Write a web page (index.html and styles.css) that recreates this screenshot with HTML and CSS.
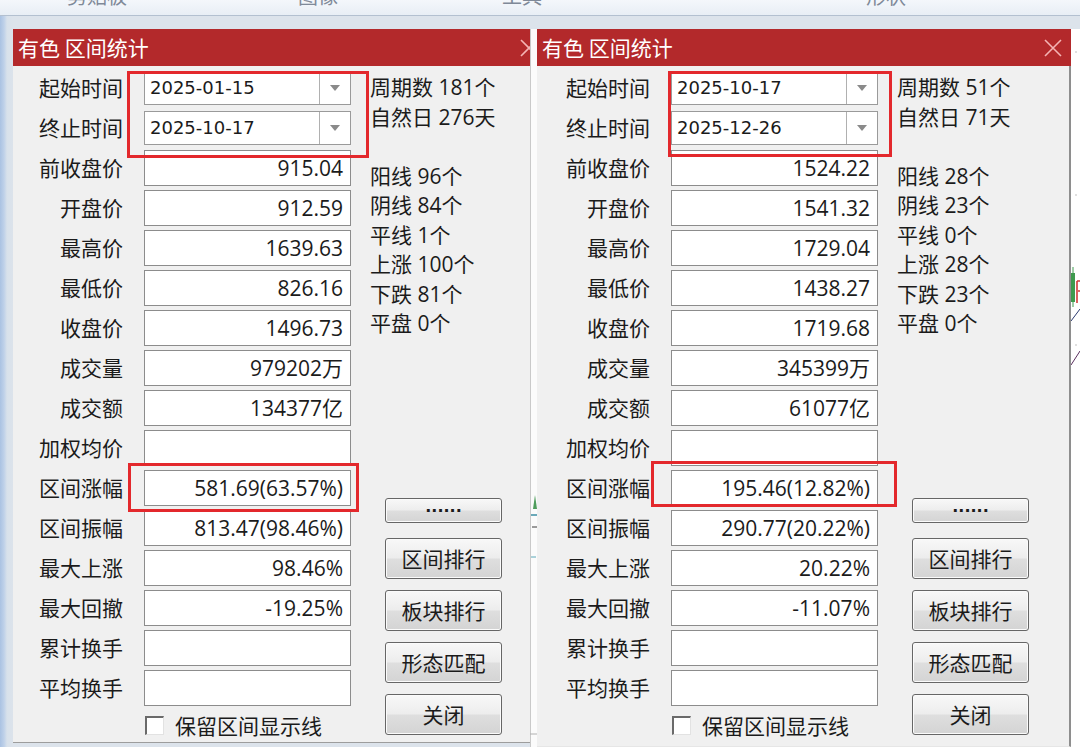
FILE: index.html
```html
<!DOCTYPE html>
<html lang="zh-CN">
<head>
<meta charset="utf-8">
<title>有色 区间统计</title>
<link rel="stylesheet" href="styles.css">
</head>
<body>
<div class="topbar">
  <span class="rib rib-1">剪贴板</span>
  <span class="rib rib-2">图像</span>
  <span class="rib rib-3">工具</span>
  <span class="rib rib-4">形状</span>
</div>
<div class="stage">
  <div class="edge"></div>

  <div class="clip clip-left">
    <section class="dialog">
      <header class="titlebar">
        <span class="title">有色 区间统计</span>
        <svg class="close" width="18" height="18" viewBox="0 0 18 18"><path d="M1 1 L17 17 M17 1 L1 17" stroke="#f4b4b4" stroke-width="1.6" fill="none"/></svg>
      </header>
      <div class="body">
        <div class="fields">
          <div class="row"><span class="lbl">起始时间</span><div class="box combo"><span class="date">2025-01-15</span><span class="drop"><svg width="10" height="6" viewBox="0 0 10 6"><path d="M0 0 H10 L5 6 Z" fill="#8a8a8a"/></svg></span></div></div>
          <div class="row"><span class="lbl">终止时间</span><div class="box combo"><span class="date">2025-10-17</span><span class="drop"><svg width="10" height="6" viewBox="0 0 10 6"><path d="M0 0 H10 L5 6 Z" fill="#8a8a8a"/></svg></span></div></div>
          <div class="row"><span class="lbl">前收盘价</span><div class="box">915.04</div></div>
          <div class="row"><span class="lbl">开盘价</span><div class="box">912.59</div></div>
          <div class="row"><span class="lbl">最高价</span><div class="box">1639.63</div></div>
          <div class="row"><span class="lbl">最低价</span><div class="box">826.16</div></div>
          <div class="row"><span class="lbl">收盘价</span><div class="box">1496.73</div></div>
          <div class="row"><span class="lbl">成交量</span><div class="box">979202万</div></div>
          <div class="row"><span class="lbl">成交额</span><div class="box">134377亿</div></div>
          <div class="row"><span class="lbl">加权均价</span><div class="box"></div></div>
          <div class="row"><span class="lbl">区间涨幅</span><div class="box">581.69(63.57%)</div></div>
          <div class="row"><span class="lbl">区间振幅</span><div class="box">813.47(98.46%)</div></div>
          <div class="row"><span class="lbl">最大上涨</span><div class="box">98.46%</div></div>
          <div class="row"><span class="lbl">最大回撤</span><div class="box">-19.25%</div></div>
          <div class="row"><span class="lbl">累计换手</span><div class="box"></div></div>
          <div class="row"><span class="lbl">平均换手</span><div class="box"></div></div>
          <div class="check-row"><span class="checkbox"></span><span class="check-label">保留区间显示线</span></div>
        </div>
        <div class="side">
          <div class="info">
            <div>周期数 181个</div>
            <div>自然日 276天</div>
            <div class="blank"></div>
            <div>阳线 96个</div>
            <div>阴线 84个</div>
            <div>平线 1个</div>
            <div>上涨 100个</div>
            <div>下跌 81个</div>
            <div>平盘 0个</div>
          </div>
          <div class="buttons">
            <button class="btn btn-more">......</button>
            <button class="btn">区间排行</button>
            <button class="btn">板块排行</button>
            <button class="btn">形态匹配</button>
            <button class="btn">关闭</button>
          </div>
        </div>
      </div>
      <div class="hl hl-dates-l"></div>
      <div class="hl hl-range-l"></div>
    </section>
  </div>

  <div class="gap">
    <svg width="7" height="718" viewBox="0 0 7 718">
      <line x1="0.5" y1="0" x2="0.5" y2="718" stroke="#c9c9c9" stroke-width="1"/>
      <path d="M5 466 L3 480 L7 480 Z" fill="#4f9d5c"/>
      <line x1="1" y1="486" x2="7" y2="486" stroke="#3b8ea3" stroke-width="1.5"/>
      <line x1="2" y1="498" x2="7" y2="498" stroke="#3a3a3a" stroke-width="1"/>
      <line x1="1" y1="528" x2="6" y2="528" stroke="#5aa8b8" stroke-width="1"/>
      <line x1="0" y1="705" x2="7" y2="705" stroke="#b0b0b0" stroke-width="1"/>
    </svg>
  </div>

  <div class="clip clip-right">
    <section class="dialog dialog-right">
      <header class="titlebar">
        <span class="title">有色 区间统计</span>
        <svg class="close" width="18" height="18" viewBox="0 0 18 18"><path d="M1 1 L17 17 M17 1 L1 17" stroke="#f4b4b4" stroke-width="1.6" fill="none"/></svg>
      </header>
      <div class="body">
        <div class="fields">
          <div class="row"><span class="lbl">起始时间</span><div class="box combo"><span class="date">2025-10-17</span><span class="drop"><svg width="10" height="6" viewBox="0 0 10 6"><path d="M0 0 H10 L5 6 Z" fill="#8a8a8a"/></svg></span></div></div>
          <div class="row"><span class="lbl">终止时间</span><div class="box combo"><span class="date">2025-12-26</span><span class="drop"><svg width="10" height="6" viewBox="0 0 10 6"><path d="M0 0 H10 L5 6 Z" fill="#8a8a8a"/></svg></span></div></div>
          <div class="row"><span class="lbl">前收盘价</span><div class="box">1524.22</div></div>
          <div class="row"><span class="lbl">开盘价</span><div class="box">1541.32</div></div>
          <div class="row"><span class="lbl">最高价</span><div class="box">1729.04</div></div>
          <div class="row"><span class="lbl">最低价</span><div class="box">1438.27</div></div>
          <div class="row"><span class="lbl">收盘价</span><div class="box">1719.68</div></div>
          <div class="row"><span class="lbl">成交量</span><div class="box">345399万</div></div>
          <div class="row"><span class="lbl">成交额</span><div class="box">61077亿</div></div>
          <div class="row"><span class="lbl">加权均价</span><div class="box"></div></div>
          <div class="row"><span class="lbl">区间涨幅</span><div class="box">195.46(12.82%)</div></div>
          <div class="row"><span class="lbl">区间振幅</span><div class="box">290.77(20.22%)</div></div>
          <div class="row"><span class="lbl">最大上涨</span><div class="box">20.22%</div></div>
          <div class="row"><span class="lbl">最大回撤</span><div class="box">-11.07%</div></div>
          <div class="row"><span class="lbl">累计换手</span><div class="box"></div></div>
          <div class="row"><span class="lbl">平均换手</span><div class="box"></div></div>
          <div class="check-row"><span class="checkbox"></span><span class="check-label">保留区间显示线</span></div>
        </div>
        <div class="side">
          <div class="info">
            <div>周期数 51个</div>
            <div>自然日 71天</div>
            <div class="blank"></div>
            <div>阳线 28个</div>
            <div>阴线 23个</div>
            <div>平线 0个</div>
            <div>上涨 28个</div>
            <div>下跌 23个</div>
            <div>平盘 0个</div>
          </div>
          <div class="buttons">
            <button class="btn btn-more">......</button>
            <button class="btn">区间排行</button>
            <button class="btn">板块排行</button>
            <button class="btn">形态匹配</button>
            <button class="btn">关闭</button>
          </div>
        </div>
      </div>
      <div class="hl hl-dates-r"></div>
      <div class="hl hl-range-r"></div>
    </section>
  </div>

  <div class="chart-edge">
    <svg width="9" height="718" viewBox="0 0 9 718">
      <circle cx="5" cy="23" r="0.8" fill="#b8b8b8"/>
      <circle cx="5" cy="166" r="0.8" fill="#b8b8b8"/>
      <rect x="0" y="244" width="4" height="29" fill="#3f9a4e"/>
      <line x1="2" y1="238" x2="2" y2="278" stroke="#3f9a4e" stroke-width="1"/>
      <path d="M6 252 V274 M6 252 H9 M7 262 H9" stroke="#d23a3a" stroke-width="1.6" fill="none"/>
      <line x1="0" y1="292" x2="9" y2="280" stroke="#2b3a6e" stroke-width="1"/>
      <line x1="0" y1="336" x2="9" y2="322" stroke="#5a2f5e" stroke-width="1"/>
      <circle cx="5" cy="316" r="0.8" fill="#b8b8b8"/>
    </svg>
  </div>
</div>
</body>
</html>
```

FILE: styles.css
```css
* {
  box-sizing: border-box;
  margin: 0;
  padding: 0;
}

html,
body {
  width: 1080px;
  height: 747px;
  overflow: hidden;
}

body {
  background: #dce3eb;
  font-family: "Noto Sans CJK SC", sans-serif;
  color: #1b1b1b;
}

/* ribbon strip at the very top (labels cut off, as in the source capture) */
.topbar {
  height: 16px;
  display: flex;
  overflow: hidden;
  padding-left: 67px;
  background: linear-gradient(#f4f7fb, #e8eef5);
  border-bottom: 1px solid #b3c0d0;
}

.rib {
  font-size: 20px;
  line-height: 20px;
  margin-top: -14px;
  color: #7f8998;
  white-space: nowrap;
}

.rib-2 { margin-left: 171px; }
.rib-3 { margin-left: 164px; }
.rib-4 { margin-left: 324px; }

.stage {
  display: flex;
  height: 731px;
}

.edge {
  width: 13px;
  background: linear-gradient(90deg, #aac2e2 0, #bfd1e9 4px, #d8e1eb 7px, #dce3eb 13px);
}

.clip {
  margin-top: 13px;
  height: 718px;
  overflow: hidden;
}

.clip-left { width: 517px; }
.clip-right { width: 534px; }

.gap {
  width: 7px;
  margin-top: 13px;
  height: 718px;
  background: #fbfbfb;
}

.chart-edge {
  width: 9px;
  margin-top: 13px;
  height: 718px;
  background: #ffffff;
}

.gap svg,
.chart-edge svg {
  display: block;
}

/* dialog */
.dialog {
  position: relative;
  width: 534px;
  height: 714px;
  background: #f0f0f0;
  display: flex;
  flex-direction: column;
}

.dialog-right {
  height: 718px;
}

.titlebar {
  height: 37px;
  flex: none;
  background: #b3292b;
  color: #ffffff;
  display: flex;
  align-items: center;
  justify-content: space-between;
  padding: 0 9px 0 5px;
}

.title {
  font-size: 21px;
  line-height: 1;
  margin-top: -1px;
}

.close {
  display: block;
}

.body {
  flex: 1;
  display: flex;
  padding-top: 4px;
  border-right: 2px solid #8e8e8e;
  border-bottom: 1px solid #9d9d9d;
}

.dialog-right .body {
  padding-left: 3px;
  border-bottom-color: #e6e6e6;
}

.fields {
  width: 338px;
  flex: none;
  display: flex;
  flex-direction: column;
}

.row {
  display: flex;
  align-items: center;
  height: 36px;
  margin-bottom: 4px;
}

.lbl {
  width: 110px;
  flex: none;
  text-align: right;
  font-size: 21px;
  line-height: 1;
  white-space: nowrap;
  margin-top: -2px;
}

.box {
  margin-left: 21px;
  width: 207px;
  height: 36px;
  flex: none;
  background: #ffffff;
  border: 1px solid #8c8c8c;
  display: flex;
  align-items: center;
  justify-content: flex-end;
  padding-right: 7px;
  font-family: "Open Sans", "Noto Sans CJK SC", sans-serif;
  font-size: 21px;
  line-height: 1;
  white-space: nowrap;
}

.combo {
  height: 34px;
  padding-right: 0;
  justify-content: space-between;
  border-color: #9a9a9a;
}

.date {
  padding-left: 5px;
  font-family: "DejaVu Sans", sans-serif;
  font-size: 18px;
}

.drop {
  width: 31px;
  height: 100%;
  border-left: 1px solid #b0b0b0;
  display: flex;
  align-items: center;
  justify-content: center;
}

.check-row {
  display: flex;
  align-items: center;
  height: 30px;
  margin-left: 132px;
  gap: 11px;
}

.checkbox {
  width: 19px;
  height: 19px;
  background: #ffffff;
  border-top: 2px solid #6a6a6a;
  border-left: 2px solid #6a6a6a;
  border-right: 1px solid #e2e2e2;
  border-bottom: 1px solid #e2e2e2;
}

.check-label {
  font-size: 21px;
  line-height: 1;
}

.side {
  margin-left: 19px;
  display: flex;
  flex-direction: column;
}

.info {
  margin-top: 3px;
  font-family: "Open Sans", "Noto Sans CJK SC", sans-serif;
  font-size: 21px;
  line-height: 29.5px;
  white-space: nowrap;
}

.info .blank {
  height: 29.5px;
}

.buttons {
  margin-top: 159px;
  margin-left: 15px;
  width: 117px;
  display: flex;
  flex-direction: column;
  gap: 11px;
}

.btn {
  height: 41px;
  border: 1px solid #666666;
  border-radius: 3px;
  background: linear-gradient(#f8f8f8, #ededed 48%, #dedede 52%, #d4d4d4);
  box-shadow: inset 0 0 0 1px #fbfbfb;
  font-family: "Noto Sans CJK SC", sans-serif;
  font-size: 21px;
  line-height: 1;
  color: #1b1b1b;
}

.btn-more {
  height: 25px;
  margin-bottom: 4px;
  font-family: "DejaVu Sans", sans-serif;
  font-size: 16px;
  font-weight: 700;
  letter-spacing: 0;
  padding-bottom: 7px;
}

/* red annotation rectangles over the dialogs */
.hl {
  position: absolute;
  border: 3px solid #e3282c;
  pointer-events: none;
}

.hl-dates-l { left: 114px; top: 42px; width: 242px; height: 87px; }
.hl-range-l { left: 115px; top: 434px; width: 231px; height: 49px; }
.hl-dates-r { left: 131px; top: 42px; width: 224px; height: 86px; }
.hl-range-r { left: 114px; top: 432px; width: 246px; height: 46px; }
```
